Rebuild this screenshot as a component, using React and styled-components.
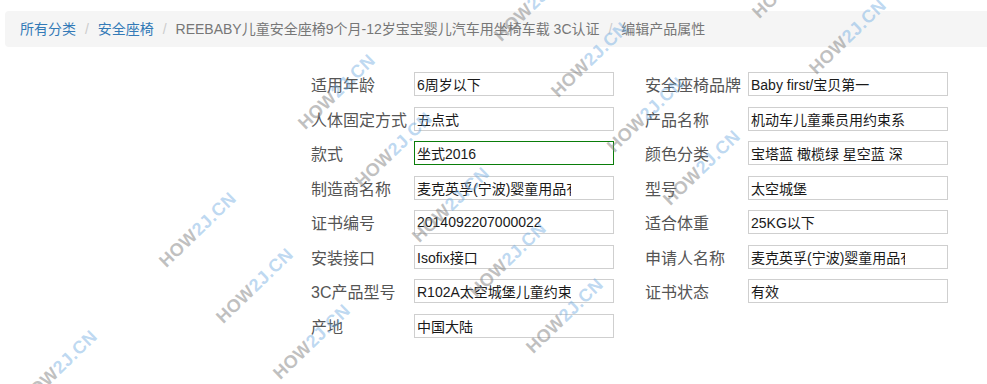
import styled, { createGlobalStyle } from 'styled-components';

const GlobalStyle = createGlobalStyle`
    html, body {
        margin: 0;
        background: #ffffff;
        overflow: hidden;
    }
    body {
        font-family: 'Liberation Sans', Arial, 'Noto Sans CJK SC', sans-serif;
        font-size: 14px;
        color: #333;
    }
`;

const crumbs = [
    { text: '所有分类', link: true },
    { text: '安全座椅', link: true },
    { text: 'REEBABY儿童安全座椅9个月-12岁宝宝婴儿汽车用坐椅车载 3C认证' },
    { text: '编辑产品属性' },
];

const fields = [
    ['适用年龄', '6周岁以下'],
    ['安全座椅品牌', 'Baby first/宝贝第一'],
    ['人体固定方式', '五点式'],
    ['产品名称', '机动车儿童乘员用约束系统'],
    ['款式', '坐式2016', true],
    ['颜色分类', '宝塔蓝 橄榄绿 星空蓝 深'],
    ['制造商名称', '麦克英孚(宁波)婴童用品有限公司'],
    ['型号', '太空城堡'],
    ['证书编号', '2014092207000022'],
    ['适合体重', '25KG以下'],
    ['安装接口', 'Isofix接口'],
    ['申请人名称', '麦克英孚(宁波)婴童用品有限公司'],
    ['3C产品型号', 'R102A太空城堡儿童约束系统'],
    ['证书状态', '有效'],
    ['产地', '中国大陆'],
];

// where the site's stamp lands on the shot
const marks = [
    [59, 368], [198, 230], [255, 286], [312, 342],
    [337, 92], [394, 150], [451, 205], [508, 260], [565, 316],
    [533, 4], [590, 60], [646, 115], [702, 168],
    [791, -19], [848, 37],
];

export default function App() {
    return (
        <Page>
            <GlobalStyle />
            <Breadcrumb>
                {crumbs.map((c, i) => (
                    <Crumb key={i} $first={i === 0} $link={c.link}>
                        {c.text}
                    </Crumb>
                ))}
            </Breadcrumb>

            <FormGrid>
                {fields.map(([label, value, active]) => (
                    <Field key={label}>
                        <Label>{label}</Label>
                        <Input type="text" defaultValue={value} readOnly $active={active} />
                    </Field>
                ))}
            </FormGrid>

            {marks.map(([x, y], i) => (
                <Watermark key={i} style={{ left: x, top: y }}>
                    HOW<span>2J.CN</span>
                </Watermark>
            ))}
        </Page>
    );
}

const Page = styled.div`
    position: relative;
    width: 987px;
    height: 384px;
    padding: 11px 0 0 5px;
    box-sizing: border-box;
    overflow: hidden;
`;

const Breadcrumb = styled.ol`
    display: flex;
    margin: 0 -10px 25px 0;
    padding: 8px 15px;
    list-style: none;
    background: #f5f5f5;
    border-radius: 4px;
    line-height: 20px;
    font-size: 14px;
`;

const Crumb = styled.li`
    color: ${p => (p.$link ? '#337ab7' : '#777')};
    white-space: nowrap;

    &:before {
        content: ${p => (p.$first ? 'none' : '"/\\00a0"')};
        padding: 0 5px 0 9px;
        color: #ccc;
    }
`;

const FormGrid = styled.div`
    display: grid;
    grid-template-columns: 334px 334px;
    row-gap: 10.5px;
    margin-left: 306px;
`;

const Field = styled.div`
    display: flex;
    align-items: center;
    height: 24px;
`;

const Label = styled.span`
    width: 103px;
    font-size: 16px;
    color: #555;
    white-space: nowrap;
`;

const Input = styled.input`
    width: 200px;
    height: 24px;
    box-sizing: border-box;
    padding: 1px 42px 1px 2px;
    border: 1px solid ${p => (p.$active ? '#0a7d0a' : '#cfcfcf')};
    border-radius: 0;
    outline: none;
    background: #fff;
    font-family: 'Liberation Sans', Arial, 'Noto Sans CJK SC', sans-serif;
    font-size: 14px;
    color: #1a1a1a;
`;

const Watermark = styled.div`
    position: absolute;
    transform: translate(-50%, -50%) rotate(-44deg);
    font-family: 'Liberation Sans', Arial, sans-serif;
    font-weight: 700;
    font-size: 18px;
    letter-spacing: 0.5px;
    color: rgba(130, 130, 130, 0.5);
    white-space: nowrap;
    pointer-events: none;

    span {
        color: rgba(110, 170, 225, 0.45);
    }
`;
